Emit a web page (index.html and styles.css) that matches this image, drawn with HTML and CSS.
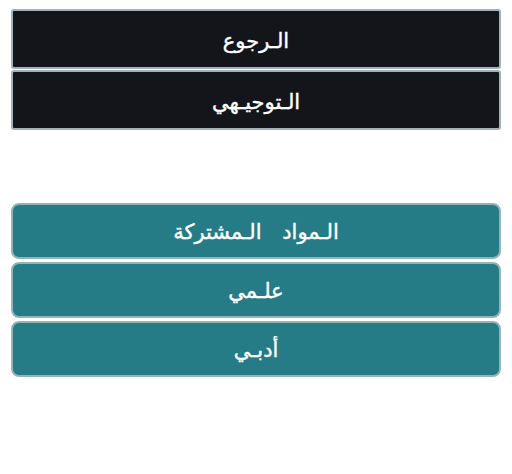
FILE: index.html
```html
<!DOCTYPE html>
<html lang="ar" dir="rtl">
<head>
<meta charset="utf-8">
<link rel="stylesheet" href="styles.css">
</head>
<body>
<div class="page">
  <div class="group top">
    <div class="btn dark">الـرجوع</div>
    <div class="btn dark">الـتوجيـهي</div>
  </div>
  <div class="group subjects">
    <div class="btn teal">الـمواد الـمشتركة</div>
    <div class="btn teal">علـمي</div>
    <div class="btn teal">أدبـي</div>
  </div>
</div>
</body>
</html>
```
FILE: styles.css
```css
html, body {
  margin: 0;
  padding: 0;
  background: #ffffff;
}
.page {
  padding: 9px 11px 0 11px;
  font-family: "DejaVu Sans", sans-serif;
}
.group {
  display: flex;
  flex-direction: column;
}
.top {
  gap: 1px;
}
.subjects {
  margin-top: 73px;
  gap: 3px;
}
.btn {
  box-sizing: border-box;
  display: flex;
  align-items: center;
  justify-content: center;
  color: #ffffff;
  font-size: 21px;
  -webkit-text-stroke: 0.4px #ffffff;
  word-spacing: 14px;
  letter-spacing: 2px;
  padding-top: 4px;
}
.dark {
  height: 60px;
  background: #13151b;
  border: 2px solid #a3b1ba;
  border-radius: 3px;
}
.teal {
  height: 56px;
  background: #267c86;
  border: 2px solid #93b4b9;
  border-radius: 8px;
  padding-top: 2px;
}
```
